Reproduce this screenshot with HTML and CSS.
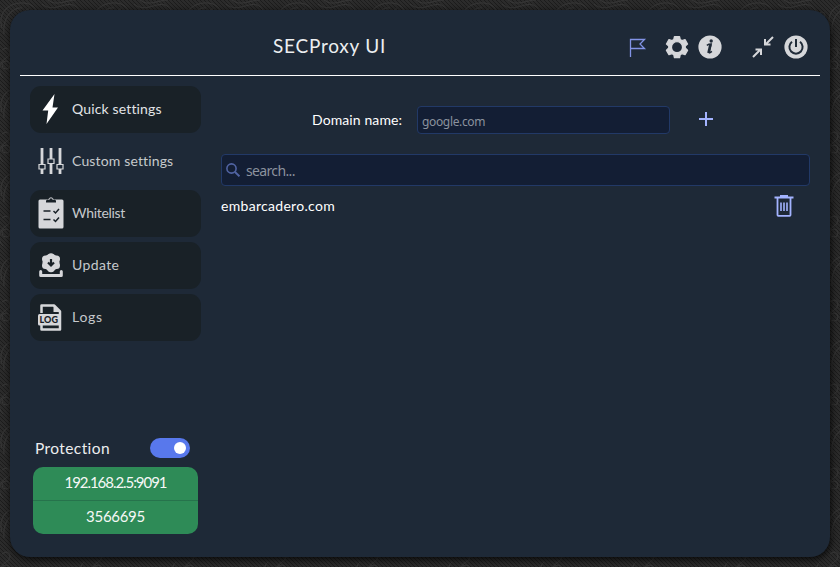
FILE: index.html
```html
<!DOCTYPE html>
<html lang="en">
<head>
<meta charset="utf-8">
<title>SECProxy UI</title>
<link rel="stylesheet" href="styles.css">
</head>
<body>
<svg class="texture" width="840" height="567" aria-hidden="true">
  <defs>
    <pattern id="weave" width="4" height="4" patternUnits="userSpaceOnUse"><path d="M-1 -1L5 5M-1 3L1 5M3 -1L5 1" stroke="#1c1c1c" stroke-width="1"/></pattern>
    <pattern id="swirls" width="92" height="84" patternUnits="userSpaceOnUse">
      <g fill="none" stroke="#363636" stroke-width="1">
        <path d="M2 28C-3 12 10 2 24 3s18 16 7 18-9-12-2-12M4 34C2 16 14 7 22 8M42 4c12 10 24-4 33 2s7 18-4 17M48 0c8 7 18 0 28 0M2 50c8-6 11 4 4 8s-9 14-3 20M80 30c9 3 11 18 2 21s-10-10-2-12M84 58c-9 8 6 12 1 22M12 75c6-9 18-5 17 2s-14 6-11 0M40 78c6-11 15-5 24-2s14-3 17-10"/>
        <circle cx="6" cy="65" r="4"/><circle cx="62" cy="78" r="4"/><circle cx="86" cy="15" r="3"/>
      </g>
    </pattern>
  </defs>
  <rect width="840" height="567" fill="#2b2b2b"/>
  <rect width="840" height="567" fill="url(#weave)"/>
  <rect width="840" height="567" fill="url(#swirls)"/>
</svg>
<main class="window">
  <header class="header">
    <h1 class="title">SECProxy UI</h1>
    <div class="tools">
      <svg class="flag" width="18" height="20" viewBox="0 0 18 20"><path d="M1.500 19V1.500H15.500L11 6L15.500 10.500H2" fill="none" stroke="#8293e6" stroke-width="1.300"/></svg>
      <svg class="gear" width="24" height="24" viewBox="0 0 24 24"><path fill="#d6d7da" fill-rule="evenodd" d="M9.500 1h5l.7 3.100 1.800 1 3-1 2.500 4.300-2.300 2.100v2l2.300 2.200-2.500 4.300-3-1-1.800 1-.7 3h-5l-.7-3-1.800-1-3 1-2.500-4.300 2.300-2.200v-2L1.500 8.400 4 4.100l3 1 1.800-1ZM12 6a5.600 5.600 0 1 0 0 11.200a5.600 5.600 0 0 0 0-11.200Z" stroke="#d6d7da" stroke-width="1.400" stroke-linejoin="round" transform="translate(0 .6)"/></svg>
      <svg class="info" width="24" height="24" viewBox="0 0 24 24"><circle cx="12" cy="12" r="11.600" fill="#d6d7da"/><circle cx="13.200" cy="6" r="1.700" fill="#202b38"/><path d="M8.800 10.300q2-1.200 4.400-1.200l-2.100 8.200q-.2 1.300 2.800-1" fill="none" stroke="#202b38" stroke-width="1.500"/><path d="M12.400 9.500L10.500 18" stroke="#202b38" stroke-width="2.600"/></svg>
      <svg class="shrink" width="22" height="22" viewBox="0 0 22 22"><path d="M1 21l7-7M3.500 13.500H9V19M21 1l-7 7M13 3v5.500h5.500" fill="none" stroke="#d6d7da" stroke-width="2"/></svg>
      <svg class="power" width="24" height="24" viewBox="0 0 24 24"><circle cx="12" cy="12" r="11.600" fill="#d6d7da"/><path d="M8 6.800a6.600 6.600 0 1 0 8 0M12 4v8" fill="none" stroke="#202b38" stroke-width="2"/></svg>
    </div>
  </header>
  <div class="body">
    <aside class="sidebar">
      <nav class="nav">
        <a class="item active"><svg width="30" height="32" viewBox="0 1 30 32"><path d="M18.500 2L6.500 18.500h5.700L10.500 32 22 15.500H16.500Z" fill="#fff"/></svg><span class="quick">Quick settings</span></a>
        <a class="item plain"><svg width="30" height="32" viewBox="0 0 30 32"><path d="M6 3v26M15 3v26M24 3v26" stroke="#d6d7da" stroke-width="2.800"/><path d="M3 19.500h6v4.500H3ZM12 14h6v4.500h-6ZM21 19.500h6v4.500h-6Z" fill="#1e2937" stroke="#d6d7da" stroke-width="1.200"/></svg><span class="custom">Custom settings</span></a>
        <a class="item"><svg width="30" height="32" viewBox="0 0 30 32"><rect x="2.500" y="2.500" width="25" height="29" rx="1.500" fill="#d6d7da"/><path d="M10 5.500V3.500l2-1h6l2 1v2Z" fill="#192127"/><path d="M12.800 3a2.200 2.200 0 0 1 4.400 0" fill="#192127" stroke="#d6d7da" stroke-width="1"/><path d="M7.500 14h7M7.500 22.500h7M17.500 14l2 2 3.500-4M17.500 22.500l2 2 3.500-4" fill="none" stroke="#192127" stroke-width="1.500"/></svg><span class="white">Whitelist</span></a>
        <a class="item"><svg width="30" height="32" viewBox="0 0 30 32"><g fill="#d6d7da"><circle cx="15" cy="13.500" r="8.500"/><circle cx="15" cy="7.800" r="3.500"/><circle cx="9.500" cy="10" r="3.500"/><circle cx="20.500" cy="10" r="3.500"/><circle cx="9.500" cy="16.500" r="3.500"/><circle cx="20.500" cy="16.500" r="3.500"/><circle cx="15" cy="19.500" r="3.800"/></g><path d="M4.700 22.500v4h20.600v-4" fill="none" stroke="#d6d7da" stroke-width="3" stroke-linecap="round" stroke-linejoin="round"/><path d="M15 10v6M12 13.500l3 3 3-3" fill="none" stroke="#192127" stroke-width="2.200"/></svg><span class="update">Update</span></a>
        <a class="item"><svg width="30" height="32" viewBox="0 1 30 32"><path d="M5.500 13V5.500H18L24 11.500V29.500H5.500V23" fill="none" stroke="#d6d7da" stroke-width="2.500" stroke-linejoin="round"/><path d="M17.500 4.500l7.500 7.500H17.500Z" fill="#d6d7da"/><rect x="2" y="14" width="22" height="11.500" rx="1.500" fill="#d6d7da"/><text x="3.500" y="23" textLength="18.500" lengthAdjust="spacing" class="log">LOG</text></svg><span class="logs">Logs</span></a>
      </nav>
      <div class="protection"><span>Protection</span><div class="toggle"></div></div>
      <div class="status"><div class="ip">192.168.2.5:9091</div><div class="count">3566695</div></div>
    </aside>
    <section class="content">
      <div class="domain"><label>Domain name:</label><input class="name" placeholder="google.com"><svg width="14" height="14" viewBox="0 0 14 14"><path d="M7 0v14M0 7h14" stroke="#a3b3ff" stroke-width="2"/></svg></div>
      <div class="search"><svg width="14" height="14" viewBox="0 0 14 14"><circle cx="5.500" cy="5.500" r="4.600" fill="none" stroke="#5164a3" stroke-width="1.600"/><path d="M9 9l4.500 4.300" stroke="#5164a3" stroke-width="2"/></svg><input placeholder="search..."></div>
      <div class="entry"><span>embarcadero.com</span><svg width="20" height="22" viewBox="0 0 20 22"><path d="M.5 2.500h19M6 1h8M3.500 3.500V20q0 .8.800.8h11.400q.8 0 .8-.8V3.500" fill="none" stroke="#a3b3ff" stroke-width="1.800"/><path d="M7 7.500v8.500M10 7.500v8.500M13 7.500v8.500" stroke="#a3b3ff" stroke-width="1.600"/></svg></div>
    </section>
  </div>
</main>
</body>
</html>
```
FILE: styles.css
```css
* { box-sizing: border-box; }
body { margin: 0; height: 567px; overflow: hidden; padding: 10px; background: #222; font-family: Lato, "Open Sans", sans-serif; color: #eceef0; }
svg { display: block; flex: none; }
.texture { position: absolute; inset: 0; z-index: -1; }
.window { width: 820px; height: 547px; padding: 0 10px; border-radius: 20px; background: #1e2937; box-shadow: 1px 2px 6px 1px rgba(0,0,0,.7); }
.header { height: 66px; display: flex; align-items: center; justify-content: space-between; padding: 9px 12px 0 253px; border-bottom: 1px solid #fff; }
.title { margin: 0; font-size: 19px; line-height: 24px; font-weight: 400; letter-spacing: .75px; padding-bottom: 2px; white-space: nowrap; }
.tools { display: flex; align-items: center; }
.flag { margin-top: 1px; }
.gear { margin-left: 18px; }
.info { margin-left: 9px; }
.shrink { margin-left: 30px; }
.power { margin-left: 10px; }
.body { display: flex; height: 481px; }
.sidebar { width: 181px; padding: 10px 0 23px 10px; display: flex; flex-direction: column; }
.nav { display: flex; flex-direction: column; gap: 5px; }
.item { height: 47px; border-radius: 11px; background: #192127; display: flex; align-items: center; padding-left: 6px; gap: 6px; font-size: 14px; line-height: 18px; color: #c6c9cc; white-space: nowrap; }
.item svg { margin-top: -1px; }
.item.plain { background: none; }
.item span { margin-top: -2px; }
.item.active span { color: #e2e4e6; }
.quick { letter-spacing: .15px; }
.custom { letter-spacing: .15px; }
.white { letter-spacing: -.3px; }
.update { letter-spacing: .4px; }
.logs { letter-spacing: .7px; }
.log { font: 900 9px Lato, sans-serif; fill: #192127; }
.protection { margin-top: auto; display: flex; align-items: center; justify-content: space-between; height: 20px; padding: 0 11px 0 5px; font-size: 15.500px; letter-spacing: .4px; }
.toggle { width: 40px; height: 20px; border-radius: 10px; background: #5878ec; padding: 4px; }
.toggle::after { content: ""; display: block; width: 12px; height: 12px; border-radius: 50%; background: #fff; margin-left: auto; }
.status { margin: 9px 3px 0; height: 67px; border-radius: 10px; background: #2e8b57; overflow: hidden; text-align: center; font-size: 15px; line-height: 31px; color: #f5f8f6; }
.ip { height: 34px; border-bottom: 1px solid #26734c; letter-spacing: -1.050px; }
.count { letter-spacing: -.300px; }
.content { width: 589px; margin-left: 20px; padding-top: 30px; }
.domain { height: 28px; display: flex; align-items: center; padding-left: 91px; font-size: 14px; color: #fff; }
.domain label { width: 105px; white-space: nowrap; letter-spacing: .1px; margin-top: -2px; }
.domain svg { margin-left: 29px; margin-top: -2px; }
input { font-family: "Noto Sans", sans-serif; color: #ccc; outline: none; }
input::placeholder { color: #8b929e; opacity: 1; }
.name { width: 253px; height: 28px; border: 1px solid #223967; border-radius: 4px; background: #131e34; padding: 2px 4px 0; font-size: 12px; letter-spacing: -.35px; }
.search { margin-top: 20px; height: 32px; border: 1px solid #223967; border-radius: 4px; background: #131e34; display: flex; align-items: center; padding-left: 4px; }
.search svg { margin-top: -1px; }
.search input { margin-left: 6px; flex: 1; padding: 0; border: 0; background: none; font-size: 14px; letter-spacing: -.650px; }
.entry { height: 40px; display: flex; align-items: center; justify-content: space-between; padding-right: 16px; font-size: 14px; color: #fff; }
.entry span { letter-spacing: .3px; margin-top: -2px; }
```
